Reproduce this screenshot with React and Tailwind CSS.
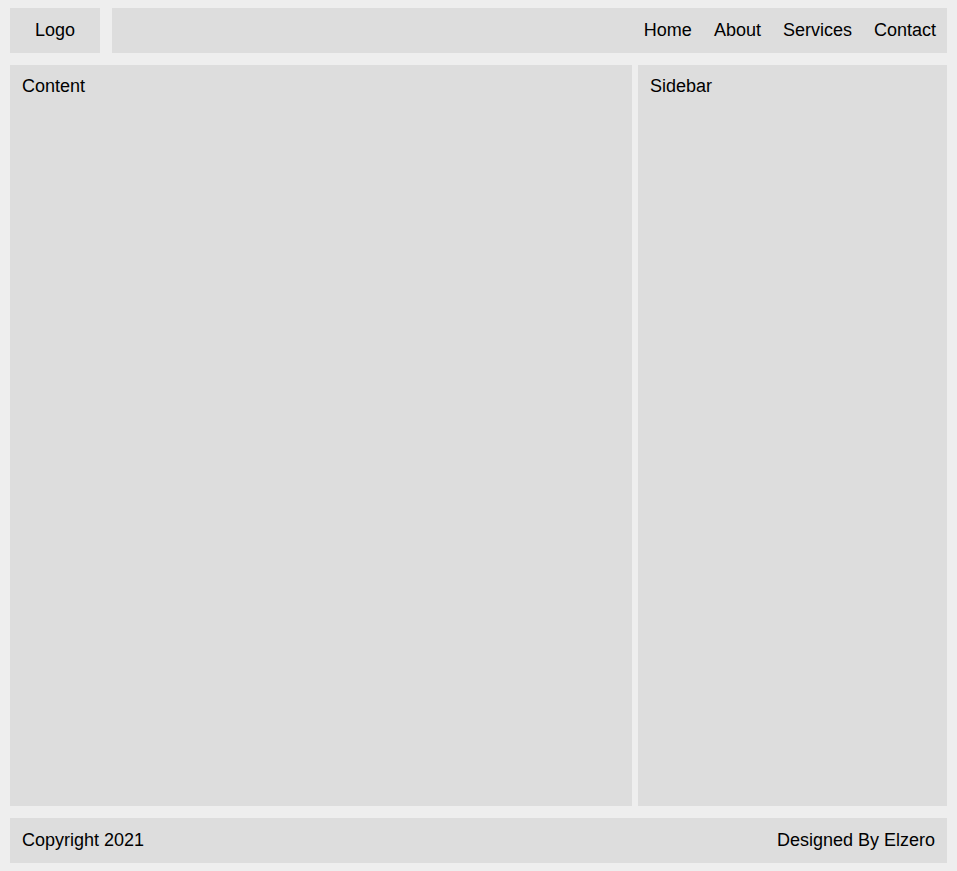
export default function App() {
  return (
    <div className="flex h-screen flex-col gap-3 bg-[#eeeeee] px-[10px] py-2 text-[18px] leading-[normal] text-black [font-family:'Liberation_Sans',Arial,sans-serif]">
      <header className="flex gap-3">
        <div className="flex w-[90px] items-center justify-center bg-[#dddddd] py-3">Logo</div>
        <nav className="flex flex-1 items-center justify-end bg-[#dddddd] py-3">
          <a className="px-[11px]">Home</a>
          <a className="px-[11px]">About</a>
          <a className="px-[11px]">Services</a>
          <a className="px-[11px]">Contact</a>
        </nav>
      </header>
      <main className="flex flex-1 gap-[6px]">
        <section className="w-[622px] bg-[#dddddd] px-3 pt-[11px]">Content</section>
        <aside className="flex-1 bg-[#dddddd] px-3 pt-[11px]">Sidebar</aside>
      </main>
      <footer className="flex items-center justify-between bg-[#dddddd] px-3 py-3">
        <span>Copyright 2021</span>
        <span>Designed By Elzero</span>
      </footer>
    </div>
  );
}
